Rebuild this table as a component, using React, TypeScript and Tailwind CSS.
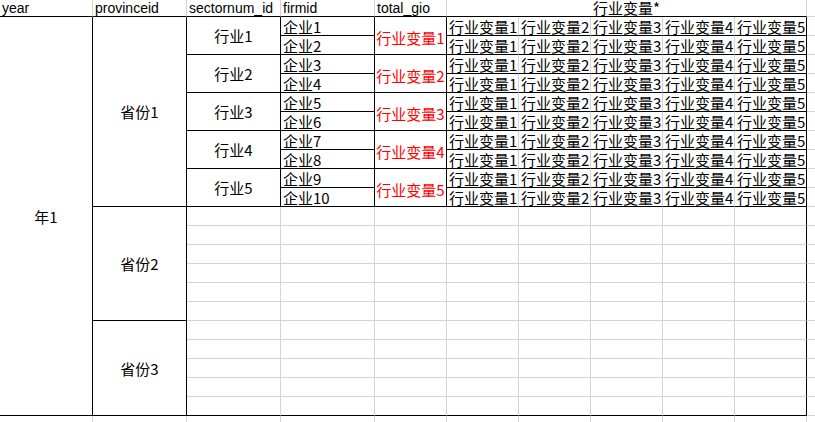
import type { ReactNode } from 'react'

// spreadsheet-like sheet, columns/rows sized to match excel grid
const sectors = [1, 2, 3, 4, 5]
const vars = [1, 2, 3, 4, 5]

function Cell({ className = '', children }: { className?: string; children?: ReactNode }) {
  return <div className={`flex min-w-0 whitespace-nowrap leading-none ${className}`}>{children}</div>
}

function HeaderRow() {
  const base =
    "border-r border-b border-r-[#d4d4d4] border-b-black items-end pl-[2px] pb-[1px] font-['Liberation_Sans',Arial,sans-serif] text-[14px]"
  return (
    <>
      <Cell className={base}>year</Cell>
      <Cell className={base}>provinceid</Cell>
      <Cell className={base}>sectornum_id</Cell>
      <Cell className={base}>firmid</Cell>
      <Cell className={base}>total_gio</Cell>
      <Cell className="col-span-5 border-r border-b border-r-[#d4d4d4] border-b-black items-end justify-center pb-[1px]">行业变量*</Cell>
      <Cell className="border-b border-b-[#d4d4d4]" />
    </>
  )
}

function DataRow({ i }: { i: number }) {
  const firm = i + 1
  const sector = Math.floor(i / 2) + 1
  return (
    <>
      {i === 0 && (
        <>
          <Cell className="row-span-21 border-r border-b border-black items-center justify-center">年1</Cell>
          <Cell className="row-span-10 border-r border-b border-black items-center justify-center">省份1</Cell>
        </>
      )}
      {i % 2 === 0 && (
        <Cell className="row-span-2 border-r border-b border-black items-center justify-center">行业{sector}</Cell>
      )}
      <Cell className="border-r border-b border-black items-end pl-[2px] pb-[1px]">企业{firm}</Cell>
      {i % 2 === 0 && (
        <Cell className="row-span-2 border-r border-b border-black items-center justify-center pt-[3px] text-[#ff0000]">
          行业变量{sector}
        </Cell>
      )}
      {vars.map((v) => (
        <Cell
          key={v}
          className={`border-r border-b border-b-black items-end pl-[2px] pb-[1px] ${v === 5 ? 'border-r-black' : 'border-r-[#d4d4d4]'}`}
        >
          行业变量{v}
        </Cell>
      ))}
      <Cell className="border-b border-b-[#d4d4d4]" />
    </>
  )
}

function EmptyRow({ j }: { j: number }) {
  const last = j === 10
  return (
    <>
      {j === 0 && (
        <Cell className="row-span-6 border-r border-b border-black items-center justify-center">省份2</Cell>
      )}
      {j === 6 && (
        <Cell className="row-span-5 border-r border-b border-black items-center justify-center">省份3</Cell>
      )}
      {[0, 1, 2, 3, 4, 5, 6, 7].map((c) => (
        <Cell
          key={c}
          className={`border-r border-b ${c === 7 ? 'border-r-black' : 'border-r-[#d4d4d4]'} ${last ? 'border-b-black' : 'border-b-[#d4d4d4]'}`}
        />
      ))}
      <Cell className="border-b border-b-[#d4d4d4]" />
    </>
  )
}

function TailRow() {
  return (
    <>
      {[0, 1, 2, 3, 4, 5, 6, 7, 8, 9].map((c) => (
        <Cell key={c} className="border-r border-r-[#d4d4d4]" />
      ))}
      <Cell />
    </>
  )
}

export default function App() {
  return (
    <div className="w-[815px] h-[422px] overflow-hidden bg-white">
      <div className="grid grid-cols-[93px_94px_94px_94px_72px_72px_72px_72px_72px_72px_8px] grid-rows-[17px_repeat(21,19px)_6px] font-['Noto_Sans_CJK_SC','Noto_Sans',sans-serif] text-[15px] text-black">
        <HeaderRow />
        {sectors.flatMap((s) => [2 * s - 2, 2 * s - 1]).map((i) => (
          <DataRow key={i} i={i} />
        ))}
        {[0, 1, 2, 3, 4, 5, 6, 7, 8, 9, 10].map((j) => (
          <EmptyRow key={j} j={j} />
        ))}
        <TailRow />
      </div>
    </div>
  )
}
